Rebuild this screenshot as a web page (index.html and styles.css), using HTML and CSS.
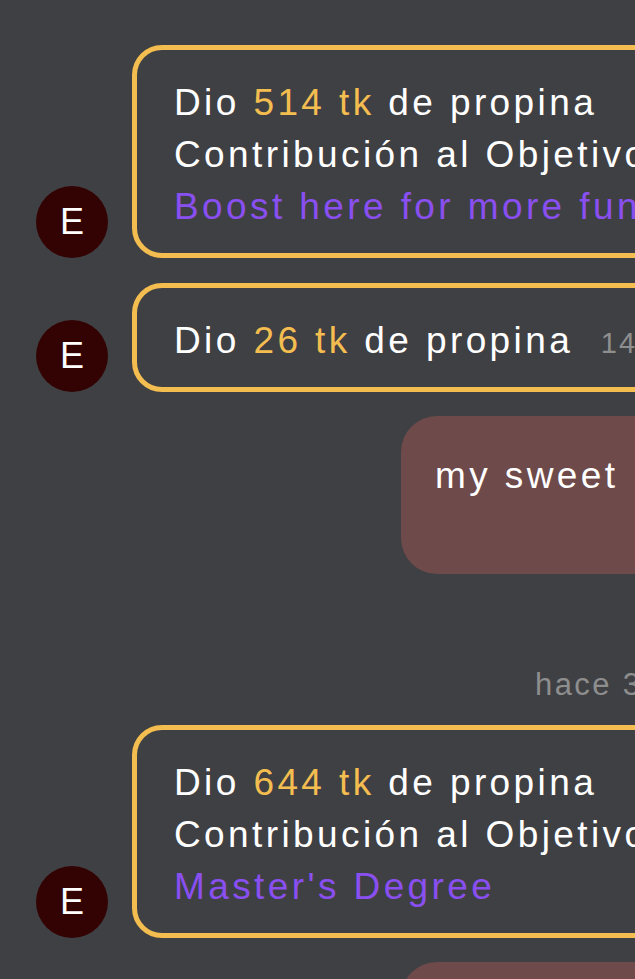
FILE: index.html
```html
<!DOCTYPE html>
<html lang="es">
<head>
<meta charset="utf-8">
<title>Chat</title>
<link rel="stylesheet" href="styles.css">
</head>
<body>
<div class="chat">
  <div class="row received first">
    <div class="avatar">E</div>
    <div class="bubble tip">
      <div class="line">Dio <span class="amount">514 tk</span> de propina</div>
      <div class="line">Contribución al Objetivo: 514 tk</div>
      <div class="line link">Boost here for more fun</div>
    </div>
  </div>

  <div class="row received">
    <div class="avatar">E</div>
    <div class="bubble tip">
      <div class="line">Dio <span class="amount">26 tk</span> de propina <span class="time">14:32</span></div>
    </div>
  </div>

  <div class="row sent">
    <div class="bubble own">
      <div class="line">my sweet</div>
      <div class="line"></div>
    </div>
  </div>

  <div class="stamp">hace 3 minutos</div>

  <div class="row received">
    <div class="avatar">E</div>
    <div class="bubble tip">
      <div class="line">Dio <span class="amount">644 tk</span> de propina</div>
      <div class="line">Contribución al Objetivo: 644 tk</div>
      <div class="line link">Master's Degree</div>
    </div>
  </div>

  <div class="row sent">
    <div class="bubble own">
      <div class="line">thank you</div>
      <div class="line"></div>
    </div>
  </div>
</div>
</body>
</html>
```

FILE: styles.css
```css
html, body {
  margin: 0;
  padding: 0;
  background: #3f4044;
  overflow: hidden;
}

body {
  width: 635px;
  height: 979px;
  font-family: "Liberation Sans", Arial, Helvetica, sans-serif;
}

.chat {
  width: 1200px;
  display: flex;
  flex-direction: column;
  padding-top: 45px;
}

.row {
  display: flex;
  align-items: flex-end;
  gap: 24px;
  margin-top: 25px;
}

.row.first {
  margin-top: 0;
}

.received {
  padding-left: 36px;
}

.sent {
  padding-left: 401px;
  margin-top: 24px;
}

.avatar {
  flex: none;
  width: 72px;
  height: 72px;
  border-radius: 50%;
  background: #330202;
  color: #ffffff;
  font-size: 36px;
  display: flex;
  align-items: center;
  justify-content: center;
  line-height: 1;
}

.bubble {
  font-size: 37px;
  line-height: 52px;
  letter-spacing: 3.4px;
  color: #ffffff;
  white-space: nowrap;
}

.bubble.tip {
  border: 5px solid #f4bd50;
  border-radius: 30px;
  padding: 26.5px 60px 20.5px 37px;
  width: 900px;
}

.bubble.own {
  background: #6e4a4a;
  border-radius: 36px;
  padding: 34px 40px 20px 34px;
  width: 700px;
}

.line {
  height: 52px;
}

.amount {
  color: #f4bd50;
}

.link {
  color: #8a4ff0;
}

.time {
  font-size: 29px;
  color: #8e8e8e;
  margin-left: 14px;
  letter-spacing: 2px;
}

.stamp {
  margin-top: 89px;
  padding-left: 535px;
  font-size: 31px;
  line-height: 44px;
  letter-spacing: 2.4px;
  color: #8e8e8e;
  margin-bottom: -7px;
}
```
